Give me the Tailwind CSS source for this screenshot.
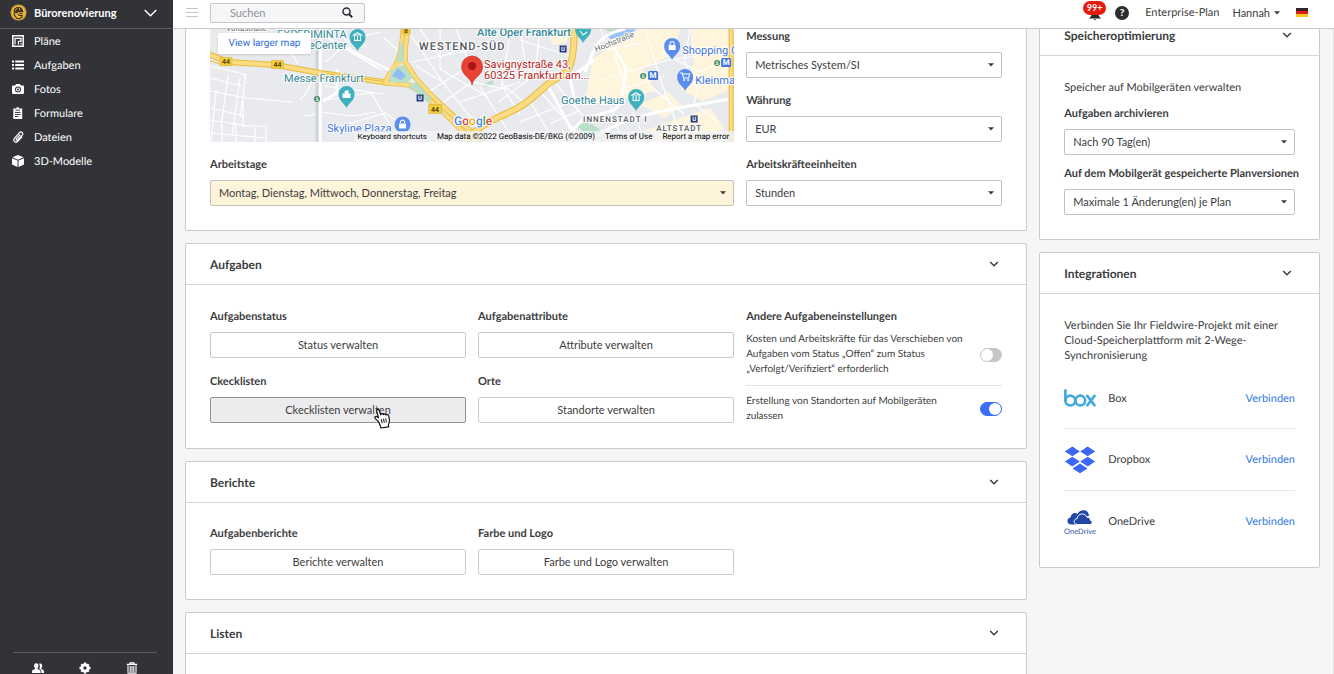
<!DOCTYPE html>
<html lang="de">
<head>
<meta charset="utf-8">
<meta name="viewport" content="width=device-width, initial-scale=1">
<title>Bürorenovierung – Einstellungen</title>
<script src="https://cdn.jsdelivr.net/npm/@tailwindcss/browser@4"></script>
</head>
<body class="flex h-screen overflow-hidden bg-[#f5f6f8] font-['Lato',sans-serif] text-[11px] leading-[15px] text-[#3c3d40] [text-rendering:geometricPrecision]">

<svg class="hidden" aria-hidden="true">
  <symbol id="chevron" viewBox="0 0 10 10"><path d="M1.2 3 5 6.8 8.800 3" fill="none" stroke="currentColor" stroke-width="1.500"/></symbol>
  <symbol id="caret" viewBox="0 0 6 4"><path d="M0 .3h6L3 3.600z" fill="currentColor"/></symbol>
</svg>

<aside class="flex w-[173px] shrink-0 flex-col bg-[#323338] text-white">
  <button type="button" class="flex h-[29px] shrink-0 items-center border-b border-[#5b5c60] pb-[3px] pl-[10px] pr-4 text-left">
    <svg class="h-[17px] w-[17px] shrink-0" viewBox="0 0 17 17" aria-hidden="true">
      <circle cx="8.500" cy="8.500" r="8" fill="#f0b93a"/>
      <circle cx="8.500" cy="8.500" r="7.200" fill="none" stroke="#8a6a2a" stroke-width=".4"/>
      <path d="M3.500 8.200C3.500 4.800 5.600 3 8.500 3c2.600 0 4.300 1.500 4.600 4.200l.8 1H8.200l-1.400 1.300z" fill="#3b3022"/>
      <path d="M5.300 7.200c.2-1.600 1-2.600 2.400-3M9.500 4v2.400" fill="none" stroke="#f0b93a" stroke-width=".8"/>
      <path d="M4.300 9v2l2.500 3.300 2.300.4 2.600-1.300.5-2.100-2.600.2-1.800-1.200" fill="none" stroke="#3b3022" stroke-width="1.200"/>
      <path d="M9.300 9.200h3.200v.9H9.300z" fill="#3b3022"/>
    </svg>
    <span class="ml-[7px] flex-1 text-[11px] font-bold">Bürorenovierung</span>
    <svg class="h-[8px] w-[13px]" viewBox="0 0 13 8" aria-hidden="true"><path d="M.7 1 6.500 6.800 12.300 1" fill="none" stroke="#fff" stroke-width="1.400"/></svg>
  </button>
  <nav class="flex flex-col">
    <a href="#" class="flex h-6 items-center gap-[10px] pl-3">
      <svg class="h-3 w-3" viewBox="0 0 12 12" fill="none" stroke="#fff" aria-hidden="true"><path d="M.8.800h10.400v10.400H.8z" stroke-width="1.500"/><path d="M3 9.500V3.300h6v3H6.400V9.500M9 8v1.500" stroke-width="1.200"/></svg>Pläne</a>
    <a href="#" class="flex h-6 items-center gap-[10px] pl-3">
      <svg class="h-3 w-3" viewBox="0 0 12 12" fill="#fff" aria-hidden="true"><path d="M0 1.500h2v2H0zM3.200 1.500H12v2H3.200zM0 5h2v2H0zM3.200 5H12v2H3.200zM0 8.500h2v2H0zM3.200 8.500H12v2H3.200z"/></svg>Aufgaben</a>
    <a href="#" class="flex h-6 items-center gap-[10px] pl-3">
      <svg class="h-3 w-3" viewBox="0 0 12 12" fill="#fff" aria-hidden="true"><path fill-rule="evenodd" d="M4 1h4l.8 1.600H11a1 1 0 0 1 1 1V10a1 1 0 0 1-1 1H1a1 1 0 0 1-1-1V3.600a1 1 0 0 1 1-1h2.200zM6 3.600a3 3 0 1 0 0 6 3 3 0 0 0 0-6z"/><path fill-rule="evenodd" d="M6 4.600a2 2 0 1 1 0 4 2 2 0 0 1 0-4zm0 1a1 1 0 1 0 0 2 1 1 0 0 0 0-2z"/></svg>Fotos</a>
    <a href="#" class="flex h-6 items-center gap-[10px] pl-3">
      <svg class="h-3 w-3" viewBox="0 0 12 12" aria-hidden="true"><path d="M1.300 1.500h2.900a1.500 1.500 0 0 1 3 0h3V12H1.300z" fill="#fff"/><path d="M3.400 3.200h4.800M3 5.500h5.500M3 7.500h5.500M3 9.500h3.500" stroke="#323338" stroke-width=".9"/></svg>Formulare</a>
    <a href="#" class="flex h-6 items-center gap-[10px] pl-3">
      <svg class="h-3 w-3" viewBox="0 0 12 12" aria-hidden="true"><path d="M8.300 3.500 4.300 7.900c-.7.900.6 2 1.400 1.100l4.500-4.900C11.800 2.200 9.200-.1 7.500 1.700L2.600 7.100C.3 9.800 3.700 12.700 6 10.200l4.200-4.600" fill="none" stroke="#fff" stroke-width="1.200"/></svg>Dateien</a>
    <a href="#" class="flex h-6 items-center gap-[10px] pl-3">
      <svg class="h-3 w-3" viewBox="0 0 12 12" fill="#fff" aria-hidden="true"><path d="M6 0 11.600 2.300 6 4.800.4 2.300zM0 3.200l5.500 2.400V12L0 9.600zM12 3.200 6.500 5.600V12L12 9.600z"/></svg>3D-Modelle</a>
  </nav>
  <div class="ml-[13px] mr-4 mt-auto flex h-[22px] justify-around border-t border-[#5b5c60] px-[2px] pt-[8px]">
    <button type="button" aria-label="Personen"><svg class="h-3 w-3" viewBox="0 0 12 12" fill="#fff"><path d="M4.300 1.200c1.500 0 2.200 1.100 2.200 2.600 0 1-.4 2-1 2.500v.8c1.200.5 3 1 3 2.400V11H0V9.500c0-1.400 1.800-1.900 3-2.400v-.8c-.5-.5-.9-1.500-.9-2.500 0-1.500.8-2.600 2.200-2.600z"/><path d="M7 1.700c2-.9 3.200.3 3.200 2.200 0 1-.4 1.900-.9 2.400v.7c1.100.5 2.700 1 2.700 2.400V11H9.300V9.300c0-1.300-1-1.900-2-2.500.7-1.400 1-3.600-.3-5.100z"/></svg></button>
    <button type="button" aria-label="Einstellungen"><svg class="h-3 w-3" viewBox="0 0 12 12"><path d="M6 .5v11M.5 6h11M2.300 2.300l7.400 7.400M9.700 2.300 2.300 9.700" stroke="#fff" stroke-width="2.300"/><circle cx="6" cy="6" r="3.200" fill="none" stroke="#fff" stroke-width="2.400"/><circle cx="6" cy="6" r="1.700" fill="#323338"/></svg></button>
    <button type="button" aria-label="Papierkorb"><svg class="h-3 w-3" viewBox="0 0 12 12" fill="none" stroke="#fff"><path d="M.8 2.300h10.400M4 1.900V.8h4v1.100" stroke-width="1.200"/><path d="M2 3.300v7.900h8V3.300M4.200 4v6.500M6 4v6.500M7.800 4v6.500" stroke-width="1.100"/></svg></button>
  </div>
</aside>

<div class="flex min-w-0 flex-1 flex-col">
  <header class="flex h-[29px] shrink-0 items-center border-b border-[#c9cacc] bg-white pb-[3px] pl-[13px] pr-[26px]">
    <button type="button" aria-label="Menü"><svg class="h-[9px] w-3" viewBox="0 0 12 9" stroke="#c4c5c8"><path d="M0 .5h12M0 4.500h12M0 8.500h12"/></svg></button>
    <label class="ml-3 flex h-5 w-[155px] items-center rounded-[2px] border border-[#c4c5c7] bg-[#f5f6f8] pl-[19px] pr-[11px]">
      <input type="text" placeholder="Suchen" aria-label="Suchen" class="w-0 flex-1 bg-transparent outline-none placeholder:text-[#8f9195]">
      <svg class="h-[11px] w-[11px]" viewBox="0 0 11 11" fill="none" stroke="#2b2c2f" aria-hidden="true"><circle cx="4.500" cy="4.500" r="3.500" stroke-width="1.500"/><path d="m7 7 3.200 3.200" stroke-width="2"/></svg>
    </label>
    <div class="ml-auto flex items-center">
      <button type="button" aria-label="99+ Benachrichtigungen" class="relative h-5 w-6">
        <svg class="mx-auto mt-1 h-3 w-3" viewBox="0 0 12 12" fill="#2b2c2f"><path d="M6 0a3.700 3.700 0 0 1 3.700 3.700v3L12 9.500H0l2.300-2.800v-3A3.700 3.700 0 0 1 6 0zM4.600 10.200h2.800L6 11.500z"/></svg>
        <span class="absolute -top-[2px] left-0 flex h-[14px] w-[23px] items-center justify-center rounded-full bg-[#e9190c] text-[9px] font-bold text-white">99+</span>
      </button>
      <button type="button" aria-label="Hilfe" class="ml-2 flex h-[14px] w-[14px] items-center justify-center rounded-full bg-[#2b2c2f] text-[10px] font-black text-white">?</button>
      <a href="#" class="ml-4">Enterprise-Plan</a>
      <button type="button" class="ml-[13px] flex items-center gap-1">Hannah <svg class="h-1 w-[6px]"><use href="#caret"/></svg></button>
      <button type="button" aria-label="Sprache: Deutsch" class="ml-4"><svg class="h-[9px] w-3" viewBox="0 0 12 9"><path d="M0 0h12v3H0z" fill="#322"/><path d="M0 3h12v3H0z" fill="#d8201b"/><path d="M0 6h12v3H0z" fill="#f7c51e"/></svg></button>
    </div>
  </header>

  <main class="grid min-h-0 flex-1 grid-cols-[minmax(0,3fr)_minmax(0,1fr)] items-start gap-3 overflow-hidden border-r border-[#e4e5e7] pl-3 pr-[13px]">
    <div class="flex flex-col gap-3">

      <section class="rounded-b-[2px] border border-t-0 border-[#c9cbcd] bg-white px-6 pb-6">
        <div class="grid grid-cols-3 gap-x-3 gap-y-[15px]">
          <div class="relative col-span-2 h-[113px] overflow-hidden bg-[#e8eaed]">
            <svg class="h-full w-full" viewBox="210 29 524 113" preserveAspectRatio="xMidYMid slice" role="img" aria-label="Karte von Frankfurt" font-family="Roboto, sans-serif">
              <path d="M210 29h524v113H210z" fill="#e8eaed"/>
              <g fill="#fef5dc">
                <path d="M592 60l18-14 30-17h40l-8 26-30 14 14 22-40 10-18-10-12 6z"/>
                <path d="M690 29h38v62l-26 10-22-12 14-26z"/>
                <path d="M640 104l28-12 14 14-18 12zM640 132l70-24 14 20-30 14h-50zM594 85l18 5-6 16-20-8zM548 29h22l-4 14-14 2z"/>
              </g>
              <g fill="#b9dfc6">
                <path d="M604 30l16 4 10-5h-22zM577 126l10-5 12 8 4 12-14-4zM484 84l9-4v4l-8 3z"/>
              </g>
              <path d="M606 34l12-4 18-1-8 7-18 3z" fill="#9cc3f5"/>
              <g fill="none" stroke="#fff" stroke-width="1.200">
                <path d="M210 91l36 7 46 4M216 90l-5 52M228 75l-7 52M240 78l-8 58M246 74l-6 43M210 108l34 8M210 120l33 5v-24M210 66l34 8 1 5M210 78l32 8M236 144v-20M222 144v-19M242 126h24v16M255 127v15M210 133l55 5M300 100c10-10 12-20 14-30M303 116l14-2M325 100l46-7 20 34M322 112l30 4 24-4M325 86l60 8M340 32l14 22 28 16M384 38l14 12M326 62l24-22 30-8M352 29l14 18M215 36l30 8 54-4M236 29l8 20M290 50l8 14M345 125l40-12 12 8 1 21"/>
                <path d="M410 34l34 50 27 34M420 29l20 28 24-10M428 92l38-24M438 106l34-24 38 8M446 84l-30-18M440 29v40l48 28M412 62l60-12M456 29l14 36M480 87l28 44M500 84l20 30M510 34l-8 50 24 20M528 80l-30 22M460 102l60-20M520 40l50 16M520 29l6 40 24 10M540 29l-6 52M500 60l60 4M470 124l50 18M530 101l24 40M542 94l40 44M556 84l34 40M520 122l50-20M550 124l30-14"/>
                <path d="M600 29l8 20 34-6M645 29l14 46 10 30M615 56l14 42M600 80l68-20 30-4M626 88l38-12M690 29l-6 32 14 28M660 52l40 20 22-12M700 74l-6 30 24 18M610 104l12 38M632 112l14 30M668 98l14 44M650 86l34 28M722 84l12 3"/>
              </g>
              <g fill="none" stroke="#fff" stroke-width="3">
                <path d="M339 44l54 28M324 36l54 32" stroke-width="2"/>
                <path d="M624 100l-10 10-32 10-20 22M548 86l30 56" />
                <path d="M585 72c10-22 8-36 40-43M574 98l-4-20 24-18M588 142c40-32 100-34 146-44M622 96l4-28-12-20"/>
                <path d="M320 29v113M323 101l14-8v-24"/>
              </g>
              <path d="M317 29v113" stroke="#d0d3d7" stroke-width="3"/>
              <g fill="none" stroke-linecap="round">
                <path d="M208 54l20 8 48 3 44 8 70 10" stroke="#e9b93c" stroke-width="6"/>
                <path d="M208 54l20 8 48 3 44 8 70 10" stroke="#fbdc83" stroke-width="4"/>
                <path d="M208 60l18 6M322 73l66 9" stroke="#e9b93c" stroke-width="1"/>
              </g>
              <g fill="none" stroke-linejoin="round">
                <path d="M403 29c-1 18-3 34-14 46l-4 8 24 2c14 8 30 22 64 57" stroke="#e9b93c" stroke-width="5"/>
                <path d="M408 29c-3 18-4 32-1 36l8 12c18 22 40 40 68 65" stroke="#e9b93c" stroke-width="5"/>
                <path d="M403 29c-1 18-3 34-14 46l-4 8 24 2c14 8 30 22 64 57" stroke="#fbdc83" stroke-width="3.500"/>
                <path d="M408 29c-3 18-4 32-1 36l8 12c18 22 40 40 68 65" stroke="#fbdc83" stroke-width="3.500"/>
                <path d="M390 68l14-6" stroke="#fbdc83" stroke-width="3"/>
              </g>
              <path d="M391 70l12-5 10 12-6 6-18-1z" fill="#b9dfc6"/>
              <path d="M398 68l8 8-5 4-9-4z" fill="#8fbdf8"/>
              <path d="M399 48l4-8 1 22h-7zM408 86l8-4 16 17-4 3zM430 102l8 4 8 9-8-4z" fill="#b9dfc6"/>
              <path d="M574 29c0 40-4 42-25 54-18 16-24 23-48 33-14 6-27 14-40 28" fill="none" stroke="#e9b93c" stroke-width="7"/>
              <path d="M574 29c0 40-4 42-25 54-18 16-24 23-48 33-14 6-27 14-40 28" fill="none" stroke="#fbdc83" stroke-width="5"/>
              <path d="M731 29v113" stroke="#e9b93c" stroke-width="5"/><path d="M731 29v113" stroke="#fbdc83" stroke-width="3"/>

              <g fill="#f4cd3d" stroke="#dca92a" stroke-width=".5"><path d="M220 57.500h12v8h-12zM271.500 60.500h12v8h-12zM428.500 104.500h13v9h-13zM402 26h8v8h-8z"/></g>
              <g font-size="7" font-weight="700" fill="#5e4a12" text-anchor="middle"><text x="226" y="64">44</text><text x="277.500" y="67">44</text><text x="435" y="111.500">44</text><text x="406" y="33">8</text></g>

              <g fill="#263b80"><path d="M416.500 94.500h7v7h-7zM559.500 45.500h7v7h-7zM690.500 115.500h7v7h-7z"/></g>
              <g font-size="6" font-weight="700" fill="#fff" text-anchor="middle"><text x="420" y="100">U</text><text x="563" y="51">U</text><text x="694" y="121">U</text></g>
              <g fill="#3d8b5b"><circle cx="317" cy="99" r="3"/><circle cx="643" cy="76" r="3"/><circle cx="717" cy="63" r="3"/></g>
              <g font-size="5" font-weight="700" fill="#fff" text-anchor="middle"><text x="317" y="101">S</text><text x="643" y="78">S</text><text x="717" y="65">S</text></g>
              <g fill="#3f74dd"><rect x="648" y="71" width="10" height="9" rx="1.500"/><rect x="721" y="58" width="10" height="9" rx="1.500"/></g>
              <g font-size="8" font-weight="700" fill="#fff" text-anchor="middle"><text x="653" y="78.500">M</text><text x="726" y="65.500">M</text></g>

              <g fill="#3fb0bd">
                <path d="M357.500 51c-2-5-8-7-8-14a8 8 0 0 1 16 0c0 7-6 9-8 14zM346.500 108c-2-5-8-7-8-14a8 8 0 0 1 16 0c0 7-6 9-8 14zM636 111c-2-5-8-7-8-14a8 8 0 0 1 16 0c0 7-6 9-8 14zM583 43c-2-5-8-7-8-14h16c0 7-6 9-8 14z"/>
              </g>
              <g fill="none" stroke="#fff" stroke-width="1"><path d="M353.500 35l4-2.500 4 2.500zM354.500 36v4.500h6V36M357.500 36v4M632 95l4-2.500 4 2.500zM633 96v4.500h6V96M636 96v4M580 31l3 4 4-3"/></g>
              <path d="M342.500 98v-5l2 1v-3l4-1v4l2-1v5z" fill="#fff"/>
              <g fill="#5a8df0"><path d="M672 60c-2-5-8-7-8-14a8 8 0 0 1 16 0c0 7-6 9-8 14zM685 91c-2-5-8-7-8-14a8 8 0 0 1 16 0c0 7-6 9-8 14z"/><circle cx="402.500" cy="124.500" r="8"/></g>
              <g fill="#fff"><path d="M668.500 45h7v5h-7zM399 123.500h7v5h-7z"/><path d="M670 45v-1.500a2 2 0 0 1 4 0V45M400.500 123v-1a2 2 0 0 1 4 0v1M680 73h2l1.500 5h5l1-4h-7" fill="none" stroke="#fff" stroke-width="1"/><circle cx="684" cy="80" r="1"/><circle cx="688" cy="80" r="1"/></g>
              <path d="M472 85c-1-8-10.500-9-10.500-18.500a10.500 10.500 0 0 1 21 0C482.500 76 473 77 472 85z" fill="#e94335" stroke="#b6281d" stroke-width=".6"/><circle cx="472" cy="66" r="4" fill="#a51712"/>

              <g stroke="#fff" stroke-width="2" paint-order="stroke" stroke-linejoin="round">
                <g font-size="11" fill="#338795">
                  <text x="277" y="38">EXPERIMINTA</text><text x="309" y="49">eCenter</text>
                  <text x="284" y="82">Messe Frankfurt</text><text x="477" y="36" font-weight="500">Alte Oper Frankfurt</text>
                  <text x="561" y="104">Goethe Haus</text>
                </g>
                <g font-size="11" fill="#3f74dd"><text x="327" y="132">Skyline Plaza</text><text x="682" y="54">Shopping C</text><text x="695" y="84">Kleinma</text></g>
                <g font-size="11" fill="#b3261e"><text x="484" y="68">Savignystraße 43,</text><text x="484" y="79">60325 Frankfurt am...</text></g>
                <g fill="#54575b" font-weight="500"><text x="419" y="50" font-size="11" letter-spacing="1">WESTEND-SÜD</text><text x="583" y="122" font-size="8" letter-spacing="1">INNENSTADT I</text><text x="656" y="131" font-size="8" letter-spacing="1">ALTSTADT</text></g>
                <text x="226" y="31" font-size="8" fill="#66696d">Voltastraße</text>
                <text transform="translate(596 52) rotate(-22)" font-size="8" fill="#66696d">Hochstraße</text>
                <text x="454" y="125" font-size="12" font-weight="500"><tspan fill="#4285f4">G</tspan><tspan fill="#ea4335">o</tspan><tspan fill="#f4b400">o</tspan><tspan fill="#4285f4">g</tspan><tspan fill="#34a853">l</tspan><tspan fill="#ea4335">e</tspan></text>
              </g>
            </svg>
            <a href="#" class="absolute left-2 top-[4px] flex h-[21px] w-[93px] items-center justify-center rounded-[1px] bg-white font-['Roboto',sans-serif] text-[10px] text-[#2a68d8] shadow-sm">View larger map</a>
            <div class="absolute bottom-0 right-0 flex h-[11px] items-center gap-[10px] bg-[#f3f4f5]/80 pl-1 pr-[5px] font-['Roboto',sans-serif] text-[8px] text-black">
              <button type="button">Keyboard shortcuts</button><span>Map data ©2022 GeoBasis-DE/BKG (©2009)</span><a href="#">Terms of Use</a><a href="#">Report a map error</a>
            </div>
          </div>
          <div class="flex flex-col gap-[15px]">
            <div class="flex flex-col gap-2">
              <label for="unit" class="font-bold">Messung</label>
              <div class="relative"><select id="unit" class="h-[26px] w-full appearance-none rounded-[2px] border border-[#bfc1c4] bg-white px-2 pb-[2px]"><option>Metrisches System/SI</option></select><svg class="pointer-events-none absolute right-2 top-[11px] h-1 w-[6px]"><use href="#caret"/></svg></div>
            </div>
            <div class="flex flex-col gap-2">
              <label for="currency" class="font-bold">Währung</label>
              <div class="relative"><select id="currency" class="h-[26px] w-full appearance-none rounded-[2px] border border-[#bfc1c4] bg-white px-2 pb-[2px]"><option>EUR</option></select><svg class="pointer-events-none absolute right-2 top-[11px] h-1 w-[6px]"><use href="#caret"/></svg></div>
            </div>
          </div>
          <div class="col-span-2 flex flex-col gap-2">
            <label for="days" class="font-bold">Arbeitstage</label>
            <div class="relative"><select id="days" class="h-[26px] w-full appearance-none rounded-[2px] border border-[#c5c3bd] bg-[#fef4da] px-2 pb-[2px]"><option>Montag, Dienstag, Mittwoch, Donnerstag, Freitag</option></select><svg class="pointer-events-none absolute right-2 top-[11px] h-1 w-[6px]"><use href="#caret"/></svg></div>
          </div>
          <div class="flex flex-col gap-2">
            <label for="labor" class="font-bold">Arbeitskräfteeinheiten</label>
            <div class="relative"><select id="labor" class="h-[26px] w-full appearance-none rounded-[2px] border border-[#bfc1c4] bg-white px-2 pb-[2px]"><option>Stunden</option></select><svg class="pointer-events-none absolute right-2 top-[11px] h-1 w-[6px]"><use href="#caret"/></svg></div>
          </div>
        </div>
      </section>

      <section class="rounded-[2px] border border-[#c9cbcd] bg-white">
        <div class="flex h-[41px] items-center justify-between border-b border-[#d3d5d7] px-6">
          <h2 class="text-[12px] font-bold">Aufgaben</h2>
          <button type="button" aria-label="Aufgaben einklappen" class="mr-[3px]"><svg class="h-[10px] w-[10px]"><use href="#chevron"/></svg></button>
        </div>
        <div class="grid grid-cols-3 gap-x-3 p-6">
          <div class="col-span-2 grid grid-cols-2 content-start gap-x-3 gap-y-4">
            <div class="flex flex-col gap-2"><h3 class="font-bold">Aufgabenstatus</h3><button type="button" class="h-[26px] rounded-[2px] border border-[#c9cbcd] bg-white pb-px">Status verwalten</button></div>
            <div class="flex flex-col gap-2"><h3 class="font-bold">Aufgabenattribute</h3><button type="button" class="h-[26px] rounded-[2px] border border-[#c9cbcd] bg-white pb-px">Attribute verwalten</button></div>
            <div class="flex flex-col gap-2"><h3 class="font-bold">Ckecklisten</h3>
              <button type="button" class="relative h-[26px] rounded-[2px] border border-[#8f9194] bg-[#ececee] pb-px">Ckecklisten verwalten
                <svg class="absolute left-[162px] top-[10px] h-[21px] w-[19px]" viewBox="0 0 19 21" aria-hidden="true"><path d="M5.500 13.500 2.300 10.600C1 9.200 2.700 7.700 4.200 8.800l1.300 1L3.700 3c-.4-1.800 1.800-2.300 2.400-.7l1.600 4.500c.3-1.400 2.200-1.500 2.600-.1.600-1.100 2.200-1 2.600.3.900-.9 2.400-.5 2.700.7.600 2 1.400 4.300.6 6.700l-.8 2.200.2 2.200-7.700 1.200-.6-2.200z" fill="#fff" stroke="#111" stroke-width="1.200" stroke-linejoin="round"/><path d="m8.300 11 .8 4.300M10.500 10.700l.8 4.200M12.700 10.400l.7 4" stroke="#111" stroke-width="1"/></svg>
              </button></div>
            <div class="flex flex-col gap-2"><h3 class="font-bold">Orte</h3><button type="button" class="h-[26px] rounded-[2px] border border-[#c9cbcd] bg-white pb-px">Standorte verwalten</button></div>
          </div>
          <div>
            <h3 class="font-bold">Andere Aufgabeneinstellungen</h3>
            <div class="mt-2 flex items-center justify-between gap-2 border-b border-[#e4e5e7] pb-2">
              <label for="cost" class="text-[10px] leading-[15px]">Kosten und Arbeitskräfte für das Verschieben von Aufgaben vom Status „Offen“ zum Status „Verfolgt/Verifiziert“ erforderlich</label>
              <input id="cost" type="checkbox" role="switch" class="h-[14px] w-[22px] shrink-0 appearance-none rounded-full border border-[#c6c7c9] bg-[#c6c7c9] before:block before:h-3 before:w-3 before:rounded-full before:bg-white checked:border-[#3b6ff5] checked:bg-[#3b6ff5] checked:before:ml-2">
            </div>
            <div class="mt-2 flex items-center justify-between gap-2">
              <label for="loc" class="text-[10px] leading-[15px]">Erstellung von Standorten auf Mobilgeräten zulassen</label>
              <input id="loc" type="checkbox" role="switch" checked class="h-[14px] w-[22px] shrink-0 appearance-none rounded-full border border-[#c6c7c9] bg-[#c6c7c9] before:block before:h-3 before:w-3 before:rounded-full before:bg-white checked:border-[#3b6ff5] checked:bg-[#3b6ff5] checked:before:ml-2">
            </div>
          </div>
        </div>
      </section>

      <section class="rounded-[2px] border border-[#c9cbcd] bg-white">
        <div class="flex h-[41px] items-center justify-between border-b border-[#d3d5d7] px-6">
          <h2 class="text-[12px] font-bold">Berichte</h2>
          <button type="button" aria-label="Berichte einklappen" class="mr-[3px]"><svg class="h-[10px] w-[10px]"><use href="#chevron"/></svg></button>
        </div>
        <div class="grid grid-cols-3 gap-x-3 px-6 pb-6 pt-[23px]">
          <div class="flex flex-col gap-2"><h3 class="font-bold">Aufgabenberichte</h3><button type="button" class="h-[26px] rounded-[2px] border border-[#c9cbcd] bg-white pb-px">Berichte verwalten</button></div>
          <div class="flex flex-col gap-2"><h3 class="font-bold">Farbe und Logo</h3><button type="button" class="h-[26px] rounded-[2px] border border-[#c9cbcd] bg-white pb-px">Farbe und Logo verwalten</button></div>
        </div>
      </section>

      <section class="rounded-[2px] border border-[#c9cbcd] bg-white pb-6">
        <div class="flex h-[41px] items-center justify-between border-b border-[#d3d5d7] px-6">
          <h2 class="text-[12px] font-bold">Listen</h2>
          <button type="button" aria-label="Listen einklappen" class="mr-[3px]"><svg class="h-[10px] w-[10px]"><use href="#chevron"/></svg></button>
        </div>
      </section>
    </div>

    <div class="flex flex-col gap-3">
      <section class="rounded-b-[2px] border border-t-0 border-[#c9cbcd] bg-white">
        <div class="flex h-[27px] items-center justify-between border-b border-[#d3d5d7] px-6 pb-[14px]">
          <h2 class="text-[12px] font-bold">Speicheroptimierung</h2>
          <button type="button" aria-label="Speicheroptimierung einklappen" class="mr-[3px]"><svg class="h-[10px] w-[10px]"><use href="#chevron"/></svg></button>
        </div>
        <div class="flex flex-col gap-[11px] p-6">
          <p>Speicher auf Mobilgeräten verwalten</p>
          <div class="flex flex-col gap-2">
            <label for="archive" class="font-bold">Aufgaben archivieren</label>
            <div class="relative"><select id="archive" class="h-[26px] w-full appearance-none rounded-[2px] border border-[#bfc1c4] bg-white px-2 pb-[2px]"><option>Nach 90 Tag(en)</option></select><svg class="pointer-events-none absolute right-2 top-[11px] h-1 w-[6px]"><use href="#caret"/></svg></div>
          </div>
          <div class="flex flex-col gap-2">
            <label for="versions" class="whitespace-nowrap font-bold">Auf dem Mobilgerät gespeicherte Planversionen</label>
            <div class="relative"><select id="versions" class="h-[26px] w-full appearance-none rounded-[2px] border border-[#bfc1c4] bg-white px-2 pb-[2px]"><option>Maximale 1 Änderung(en) je Plan</option></select><svg class="pointer-events-none absolute right-2 top-[11px] h-1 w-[6px]"><use href="#caret"/></svg></div>
          </div>
        </div>
      </section>

      <section class="rounded-[2px] border border-[#c9cbcd] bg-white">
        <div class="flex h-[41px] items-center justify-between border-b border-[#d3d5d7] px-6">
          <h2 class="text-[12px] font-bold">Integrationen</h2>
          <button type="button" aria-label="Integrationen einklappen" class="mr-[3px]"><svg class="h-[10px] w-[10px]"><use href="#chevron"/></svg></button>
        </div>
        <div class="px-6 pb-[15px] pt-6">
          <p>Verbinden Sie Ihr Fieldwire-Projekt mit einer Cloud-Speicherplattform mit 2-Wege-Synchronisierung</p>
          <ul class="mt-[5px]">
            <li class="flex h-[61px] items-center gap-3 border-b border-[#e4e5e7]">
              <svg class="h-[18px] w-8" viewBox="0 0 32 18" fill="none" stroke="#45a9df" stroke-width="2.700" stroke-linecap="round" aria-hidden="true"><path d="M1.400 1.400v10.200"/><circle cx="6.300" cy="11.600" r="4.900"/><circle cx="16.300" cy="11.600" r="4.900"/><path d="m23.300 6.900 7.200 9.400M30.500 6.900l-7.200 9.400"/></svg>
              <span class="flex-1">Box</span><a href="#" class="text-[#2f7be4]">Verbinden</a>
            </li>
            <li class="flex h-[62px] items-center gap-3 border-b border-[#e4e5e7]">
              <svg class="h-7 w-8" viewBox="0 0 32 28" fill="#3d66f5" aria-hidden="true"><path d="M8.300.500 15.800 5.400 8.300 10.300.8 5.400zM23.700.500l7.500 4.900-7.500 4.900-7.500-4.900zM8.300 10.700l7.500 4.900-7.500 4.900L.8 15.600zM23.700 10.700l7.500 4.900-7.500 4.900-7.500-4.900zM16 17.500l7.500 4.900L16 27.300l-7.500-4.900z"/></svg>
              <span class="flex-1">Dropbox</span><a href="#" class="text-[#2f7be4]">Verbinden</a>
            </li>
            <li class="flex h-[61px] items-center gap-3">
              <svg class="h-[26px] w-8" viewBox="0 0 32 26" aria-hidden="true"><path d="M7.500 15.500C2.600 15.500 2 9.500 6.500 8.600c.2-4 4.500-5.800 7-3.600C16-.4 24.500.1 25 6.500L12 15.500z" fill="#2446a8"/><path d="M13.500 15.500c-4.300 0-4.500-5.700-.3-6 .4-5.600 8.500-5.900 9.700-1.300 2.600-.4 3.700 1.500 3.400 3 2.600.4 2.200 4.300-.3 4.300z" fill="#2446a8" stroke="#fff" stroke-width="1"/><text x="16" y="25" text-anchor="middle" font-size="7.500" font-family="Lato, sans-serif" fill="#2d55a8">OneDrive</text></svg>
              <span class="flex-1">OneDrive</span><a href="#" class="text-[#2f7be4]">Verbinden</a>
            </li>
          </ul>
        </div>
      </section>
    </div>
  </main>
</div>
</body>
</html>
